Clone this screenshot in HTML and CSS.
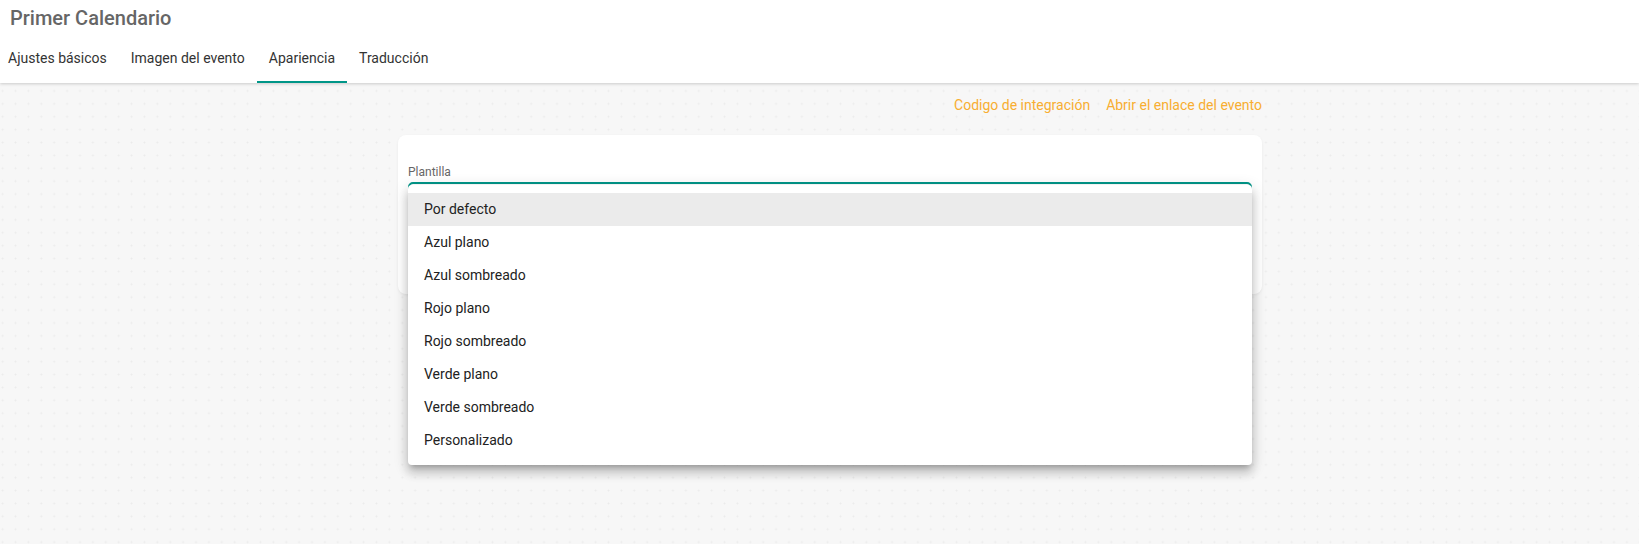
FILE: index.html
```html
<!DOCTYPE html>
<html lang="es">
<head>
<meta charset="utf-8">
<title>Primer Calendario</title>
<link rel="stylesheet" href="styles.css">
</head>
<body>
<header class="header">
  <div class="title">Primer Calendario</div>
  <nav class="tabs">
    <div class="tab">Ajustes básicos</div>
    <div class="tab">Imagen del evento</div>
    <div class="tab active">Apariencia</div>
    <div class="tab">Traducción</div>
  </nav>
</header>
<main class="main">
  <div class="column">
    <div class="links">
      <a class="link">Codigo de integración</a>
      <a class="link">Abrir el enlace del evento</a>
    </div>
    <section class="card">
      <div class="label">Plantilla</div>
      <div class="field">
        <div class="menu">
          <div class="item selected">Por defecto</div>
          <div class="item">Azul plano</div>
          <div class="item">Azul sombreado</div>
          <div class="item">Rojo plano</div>
          <div class="item">Rojo sombreado</div>
          <div class="item">Verde plano</div>
          <div class="item">Verde sombreado</div>
          <div class="item">Personalizado</div>
        </div>
      </div>
    </section>
  </div>
</main>
</body>
</html>
```
FILE: styles.css
```css
* { box-sizing: border-box; }
html, body {
  margin: 0;
  height: 100%;
}
body {
  font-family: Roboto, "Liberation Sans", Arial, sans-serif;
  background: #f7f7f7;
  overflow: hidden;
}
.header {
  position: relative;
  z-index: 2;
  background: #fff;
  padding: 0 10px;
  height: 83px;
  box-shadow: 0 1px 3px rgba(0, 0, 0, 0.18);
}
.title {
  font-size: 20px;
  font-weight: 500;
  color: #666;
  line-height: 36px;
  height: 36px;
}
.tabs {
  display: flex;
  margin-left: -14px;
}
.tab {
  padding: 0 12px 1px;
  line-height: 44px;
  font-size: 14px;
  color: #333;
  border-bottom: 2px solid transparent;
}
.tab.active {
  border-bottom-color: #009688;
}
.main {
  height: calc(100% - 83px);
  background-color: #f7f7f7;
  background-image: radial-gradient(circle, #ebebeb 0.8px, transparent 1.2px);
  background-size: 12.9px 12.9px;
  background-position: -3.8px 1.5px;
  padding: 12px 0 0 398px;
}
.column {
  width: 864px;
}
.links {
  display: flex;
  justify-content: flex-end;
  gap: 16px;
  line-height: 20px;
  height: 20px;
  margin-bottom: 20px;
}
.link {
  font-size: 14px;
  color: #f8ae31;
  cursor: pointer;
}
.card {
  background: #fff;
  border-radius: 8px;
  box-shadow: 0 1px 3px rgba(0, 0, 0, 0.06);
  padding: 28px 10px 56px;
  height: 159px;
}
.label {
  font-size: 12px;
  color: #666;
  line-height: 18px;
  height: 19px;
}
.field {
  position: relative;
  height: 56px;
  border: 2px solid #009688;
  border-radius: 5px;
}
.menu {
  position: absolute;
  z-index: 3;
  top: 1px;
  left: -2px;
  right: -2px;
  background: #fff;
  border-radius: 4px;
  padding: 8px 0;
  box-shadow: 0 5px 5px -3px rgba(0, 0, 0, 0.2), 0 8px 10px 1px rgba(0, 0, 0, 0.14), 0 3px 14px 2px rgba(0, 0, 0, 0.12);
}
.item {
  height: 33px;
  line-height: 33px;
  padding-left: 16px;
  font-size: 14px;
  color: #222;
}
.item.selected {
  background: #ebebeb;
}
```
